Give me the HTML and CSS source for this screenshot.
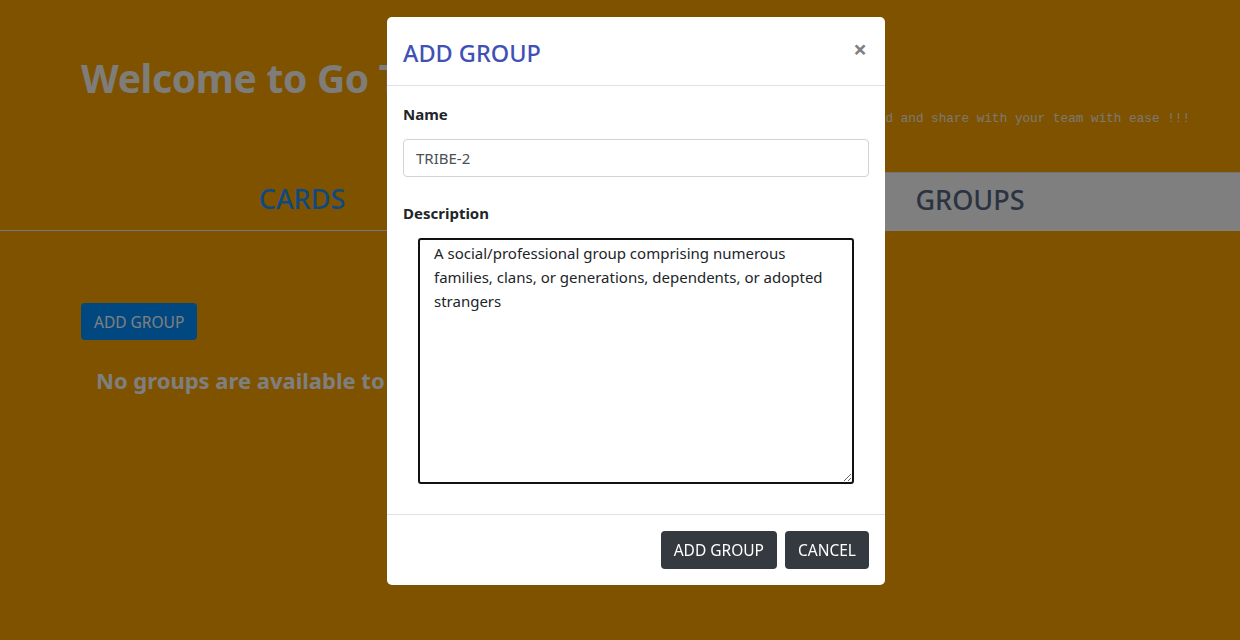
FILE: index.html
```html
<!DOCTYPE html>
<html lang="en">
<head>
<meta charset="utf-8">
<title>Go Tribe</title>
<link rel="stylesheet" href="styles.css">
</head>
<body>
<div class="page">
  <header class="hero">
    <h1 class="hero-title">Welcome to Go Tribe</h1>
    <p class="tagline">Create your own card and share with your team with ease !!!</p>
  </header>
  <nav class="tabs">
    <a class="tab tab-cards">CARDS</a>
    <a class="tab tab-groups">GROUPS</a>
  </nav>
  <main class="content">
    <button class="btn-primary">ADD GROUP</button>
    <h3 class="empty">No groups are available to display</h3>
  </main>
</div>
<div class="backdrop"></div>
<div class="modal">
  <div class="modal-header">
    <h5 class="modal-title">ADD GROUP</h5>
    <span class="close">&times;</span>
  </div>
  <div class="modal-body">
    <div class="form-group">
      <label class="label">Name</label>
      <input class="input" type="text" value="TRIBE-2">
    </div>
    <div class="form-group">
      <label class="label">Description</label>
      <textarea class="textarea">A social/professional group comprising numerous families, clans, or generations, dependents, or adopted strangers</textarea>
    </div>
  </div>
  <div class="modal-footer">
    <button class="btn-dark">ADD GROUP</button>
    <button class="btn-dark">CANCEL</button>
  </div>
</div>
</body>
</html>
```
FILE: styles.css
```css
* { box-sizing: border-box; }
html, body { margin: 0; padding: 0; }
body {
  background: #ffa400;
  font-family: "Noto Sans", "Open Sans", sans-serif;
  width: 1240px;
  height: 640px;
  overflow: hidden;
}
.page { width: 1240px; }
.hero { padding: 54px 50px 0 81px; height: 172px; }
.hero-title {
  margin: 0;
  font-size: 39px;
  line-height: 48px;
  font-weight: 700;
  color: #fdfbf4;
  letter-spacing: -0.3px;
}
.tagline {
  margin: 9px 0 0;
  text-align: right;
  font-family: "Liberation Mono", monospace;
  font-size: 12.7px;
  line-height: 16px;
  font-weight: 400;
  color: #f8f2e4;
}
.tabs { display: flex; height: 59px; }
.tab {
  display: flex;
  align-items: center;
  justify-content: center;
  font-size: 27px;
  font-weight: 500;
  padding-bottom: 5px;
}
.tab-cards {
  width: 604px;
  color: #1894ff;
  border-bottom: 1px solid #f2f2f2;
}
.tab-groups {
  margin-left: auto;
  width: 540px;
  background: #ffffff;
  border-top: 1px solid #e6e6e6;
  color: #566682;
}
.content { padding: 72px 0 0 81px; }
.btn-primary {
  display: block;
  height: 37px;
  padding: 0 13px;
  border: none;
  border-radius: 4px;
  background: #0090ff;
  color: #ffffff;
  font-family: inherit;
  font-size: 15.5px;
}
.empty {
  margin: 26px 0 0 15px;
  font-size: 22px;
  line-height: 29px;
  font-weight: 700;
  color: #ffffff;
}
.backdrop {
  position: fixed;
  inset: 0;
  background: rgba(0, 0, 0, 0.5);
}
.modal {
  position: fixed;
  top: 17px;
  left: 387px;
  width: 498px;
  height: 568px;
  background: #ffffff;
  border-radius: 5px;
  display: flex;
  flex-direction: column;
}
.modal-header {
  display: flex;
  align-items: center;
  justify-content: space-between;
  height: 69px;
  padding: 3px 16px 0;
  border-bottom: 1px solid #dee2e6;
}
.modal-title {
  margin: 0;
  font-size: 23.5px;
  font-weight: 500;
  color: #3f51b5;
}
.close {
  font-size: 24px;
  font-weight: 700;
  color: #808080;
  line-height: 1;
  margin-top: -8px;
  margin-right: 2px;
}
.modal-body { padding: 16px 16px 0; flex: 1; }
.form-group { margin-bottom: 24px; }
.label {
  display: block;
  font-size: 15px;
  line-height: 24px;
  font-weight: 700;
  color: #212529;
  margin-bottom: 13px;
}
.input {
  display: block;
  width: 466px;
  height: 38px;
  padding: 0 12px;
  border: 1px solid #ced4da;
  border-radius: 4px;
  font-family: inherit;
  font-size: 15px;
  color: #495057;
}
.textarea {
  display: block;
  margin-left: 15px;
  width: 436px;
  height: 246px;
  padding: 1px 14px;
  border: 2px solid #111111;
  border-radius: 3px;
  font-family: inherit;
  font-size: 15px;
  line-height: 24px;
  color: #212529;
  resize: vertical;
  outline: none;
}
.modal-footer {
  display: flex;
  justify-content: flex-end;
  gap: 8px;
  height: 71px;
  padding: 16px;
  border-top: 1px solid #dee2e6;
}
.btn-dark {
  height: 38px;
  padding: 0 13px;
  border: none;
  border-radius: 4px;
  background: #343a40;
  color: #ffffff;
  font-family: inherit;
  font-size: 15.5px;
}
```
